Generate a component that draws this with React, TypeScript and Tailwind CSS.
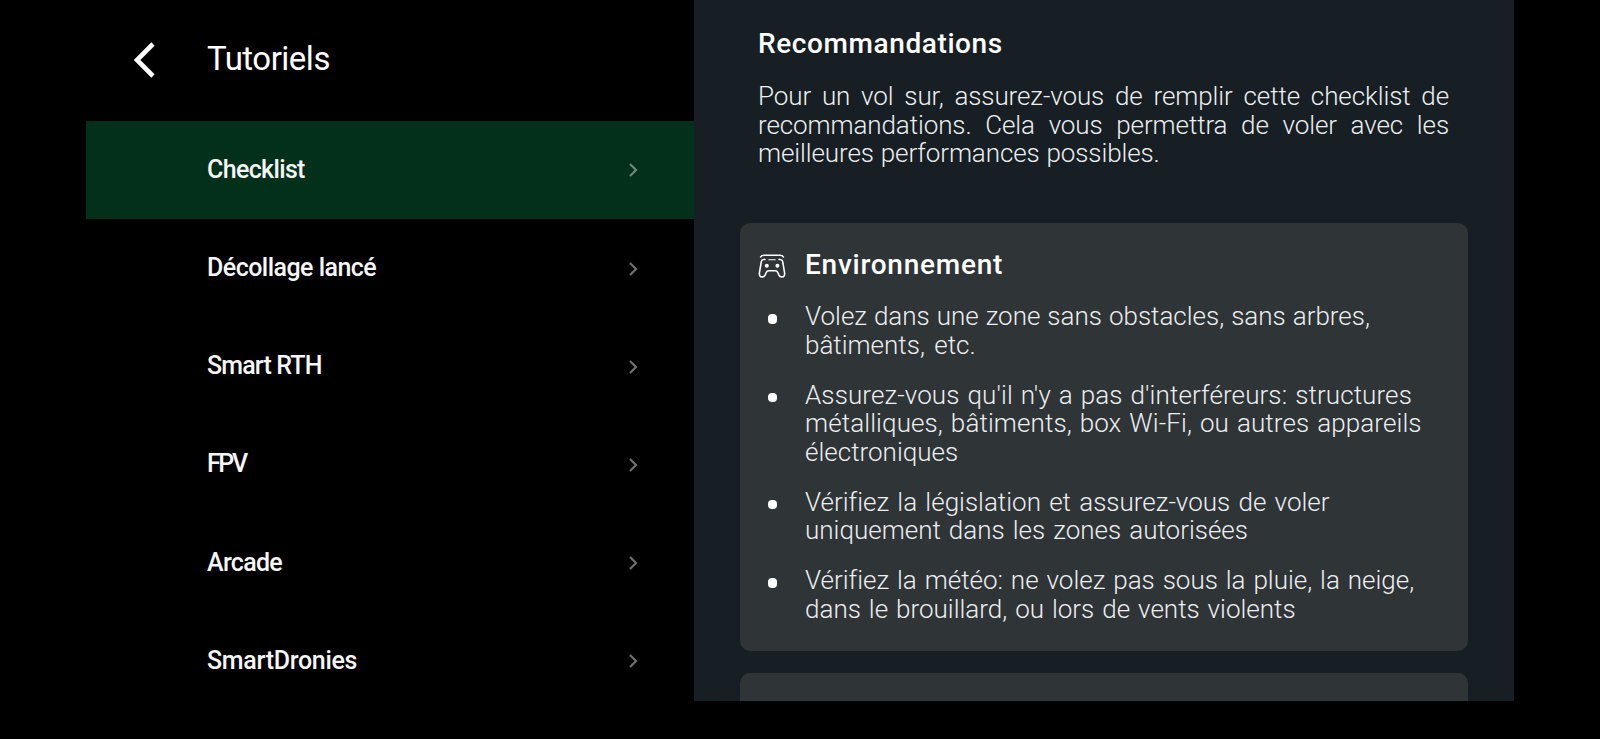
import type { ReactNode } from "react";

type MenuItem = { label: string; tracking: string; active?: boolean };

const menu: MenuItem[] = [
  { label: "Checklist", tracking: "tracking-[-0.65px]", active: true },
  { label: "Décollage lancé", tracking: "tracking-[-0.53px]" },
  { label: "Smart RTH", tracking: "tracking-[-0.85px]" },
  { label: "FPV", tracking: "tracking-[-2.4px]" },
  { label: "Arcade", tracking: "tracking-[-0.7px]" },
  { label: "SmartDronies", tracking: "tracking-[-0.3px]" },
];

type Line = { text: string; spacing: string };

const environment: Line[][] = [
  [
    { text: "Volez dans une zone sans obstacles, sans arbres,", spacing: "[word-spacing:0.6px]" },
    { text: "bâtiments, etc.", spacing: "[word-spacing:3px]" },
  ],
  [
    { text: "Assurez-vous qu'il n'y a pas d'interféreurs: structures", spacing: "tracking-[0.1px] [word-spacing:1.5px]" },
    { text: "métalliques, bâtiments, box Wi-Fi, ou autres appareils", spacing: "tracking-[0.1px] [word-spacing:1.5px]" },
    { text: "électroniques", spacing: "" },
  ],
  [
    { text: "Vérifiez la législation et assurez-vous de voler", spacing: "[word-spacing:1.9px]" },
    { text: "uniquement dans les zones autorisées", spacing: "[word-spacing:1.7px]" },
  ],
  [
    { text: "Vérifiez la météo: ne volez pas sous la pluie, la neige,", spacing: "[word-spacing:1.55px]" },
    { text: "dans le brouillard, ou lors de vents violents", spacing: "[word-spacing:1.6px]" },
  ],
];

function GamepadIcon() {
  return (
    <svg viewBox="0 0 28 24" className="mt-[3px] h-6 w-7 shrink-0" fill="none" stroke="currentColor" strokeWidth="1.6" strokeLinecap="round" strokeLinejoin="round">
      <path d="M2.6 3C3.3 1.6 4.6 1.3 6 1.3h16c1.4 0 2.7.3 3.4 1.7" />
      <path d="M10.8 5.8h6.4" strokeWidth="1.1" />
      <path d="M7 5.5H5.7c-1.4 0-2.1.8-2.4 2.1L1.5 18.400C1 21.3 2 23 4.1 23c1.6 0 2.5-.8 3.1-2.1l.9-2.2c.5-1.2 1.400-1.900 2.800-1.900h6.200c1.400 0 2.300.7 2.800 1.900l.9 2.200c.6 1.300 1.500 2.100 3.100 2.100 2.100 0 3.100-1.700 2.600-4.600L24.700 7.600c-.3-1.300-1-2.100-2.400-2.100H21" />
      <circle cx="8.8" cy="11.8" r="2" fill="currentColor" stroke="none" />
      <circle cx="19.4" cy="11.8" r="2" fill="currentColor" stroke="none" />
    </svg>
  );
}

function Card({ title, titleClass, children }: { title: string; titleClass: string; children?: ReactNode }) {
  return (
    <section className="w-[728px] shrink-0 rounded-[10px] bg-[#2f3437] pt-[24.7px] pb-[28.2px] pl-[18px]">
      <div className="flex h-[34px] items-center gap-[19px]">
        <GamepadIcon />
        <h2 className={"text-[28px] leading-[34px] font-medium whitespace-nowrap " + titleClass}>{title}</h2>
      </div>
      {children}
    </section>
  );
}

export default function App() {
  return (
    <div className="flex h-[739px] w-[1600px] overflow-hidden bg-black pl-[86px] font-['Roboto',sans-serif] text-white [font-variant-ligatures:none]">
      <aside className="w-[608px] shrink-0">
        <header className="flex h-[121.4px] items-center pl-[47px]">
          <svg viewBox="0 0 22 36" className="mb-[1px] h-9 w-[22px] shrink-0" fill="none" stroke="currentColor" strokeWidth="4.6">
            <path d="M20 2 4 18l16 16" />
          </svg>
          <h1 className="mb-[3px] ml-[52px] text-[33px] leading-10 tracking-[-0.5px]">Tutoriels</h1>
        </header>
        <nav>
          {menu.map((item) => (
            <a
              key={item.label}
              className={"flex h-[98.1px] items-center justify-between pr-[56.5px] pl-[121px] " + (item.active ? "bg-[#02301a]" : "")}
            >
              <span className={"mb-[0.6px] text-[25px] leading-[30px] font-medium text-[#f6f6f6] " + item.tracking}>{item.label}</span>
              <svg
                viewBox="0 0 9 14"
                className={"h-3.5 w-[9px] " + (item.active ? "text-[#6c8577]" : "text-[#707070]")}
                fill="none"
                stroke="currentColor"
                strokeWidth="2.2"
              >
                <path d="m1 1 6 6-6 6" />
              </svg>
            </a>
          ))}
        </nav>
      </aside>
      <main className="flex h-[701px] w-[820px] shrink-0 flex-col overflow-hidden bg-[#171e24] pt-[26.7px] pl-[46px]">
        <h2 className="pl-[18px] text-[28px] leading-[34px] font-medium tracking-[0.6px]">Recommandations</h2>
        <p className="mt-[21.8px] mb-[55.6px] ml-[18px] w-[691px] text-justify text-[26px] leading-[28.4px] font-light tracking-[-0.1px] text-[#eceeef]">
          Pour un vol sur, assurez-vous de remplir cette checklist de recommandations. Cela vous permettra de voler avec les{" "}
          <span className="[word-spacing:0.6px]">meilleures performances possibles.</span>
        </p>
        <Card title="Environnement" titleClass="tracking-[0.75px]">
          <ul className="mt-[20.1px] flex flex-col gap-[21.4px]">
            {environment.map((lines) => (
              <li key={lines[0].text} className="flex gap-[28px] pl-[9.5px]">
                <span className="mt-[12px] size-[9.5px] shrink-0 rounded-[4px] bg-white" />
                <div className="text-[26px] leading-[28.55px] font-light text-[#eceeef]">
                  {lines.map((line) => (
                    <div key={line.text} className={"whitespace-nowrap " + line.spacing}>
                      {line.text}
                    </div>
                  ))}
                </div>
              </li>
            ))}
          </ul>
        </Card>
        <div className="h-[21.5px] shrink-0" />
        <Card title="Matériel" titleClass="tracking-[2.6px]" />
      </main>
    </div>
  );
}
